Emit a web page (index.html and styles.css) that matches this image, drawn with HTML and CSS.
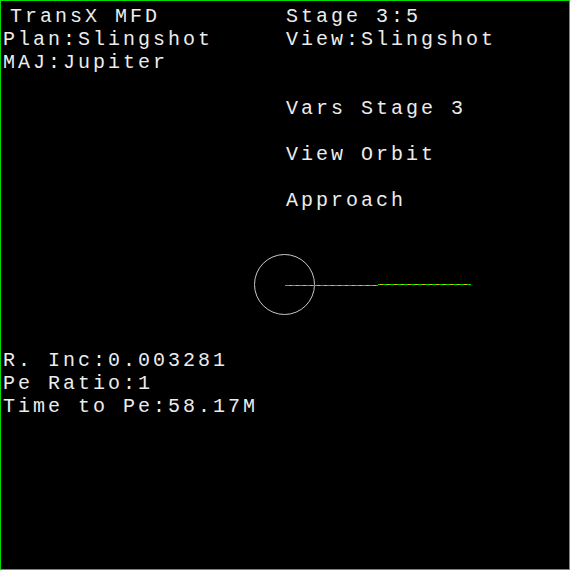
FILE: index.html
```html
<!DOCTYPE html>
<html>
<head>
<meta charset="utf-8">
<link rel="stylesheet" href="styles.css">
</head>
<body>
<div class="mfd">
  <div class="top">
    <div class="col left">
      <div class="line title">TransX MFD</div>
      <div class="line">Plan:Slingshot</div>
      <div class="line">MAJ:Jupiter</div>
    </div>
    <div class="col right">
      <div class="line">Stage 3:5</div>
      <div class="line">View:Slingshot</div>
      <div class="line"></div>
      <div class="line"></div>
      <div class="line">Vars Stage 3</div>
      <div class="line"></div>
      <div class="line">View Orbit</div>
      <div class="line"></div>
      <div class="line">Approach</div>
    </div>
  </div>
  <svg class="plot" width="568" height="137" viewBox="0 0 568 137" shape-rendering="crispEdges">
    <defs>
      <pattern id="dash" patternUnits="userSpaceOnUse" x="284" y="0" width="7" height="137">
        <rect x="0" y="0" width="4" height="137" fill="#00e400"/>
        <rect x="4" y="0" width="3" height="137" fill="#d8c800"/>
      </pattern>
    </defs>
    <circle cx="283.5" cy="72.5" r="30" fill="none" stroke="#c8c8c8" stroke-width="1" shape-rendering="auto"/>
    <rect x="284" y="73" width="93" height="1" fill="url(#dash)"/>
    <rect x="377" y="72" width="93" height="1" fill="url(#dash)"/>
  </svg>
  <div class="bottom">
    <div class="line">R. Inc:0.003281</div>
    <div class="line">Pe Ratio:1</div>
    <div class="line">Time to Pe:58.17M</div>
  </div>
</div>
</body>
</html>
```

FILE: styles.css
```css
html, body {
  margin: 0;
  padding: 0;
  background: #000;
}
.mfd {
  box-sizing: border-box;
  width: 570px;
  height: 570px;
  border: 1px solid #00e000;
  background: #000;
  color: #ececec;
  font-family: "Liberation Mono", "Courier New", monospace;
  font-size: 20px;
  letter-spacing: 3px;
  line-height: 23px;
  padding-top: 4px;
  overflow: hidden;
}
.top {
  display: flex;
}
.col.left {
  width: 283px;
}
.line {
  height: 23px;
  padding-left: 2px;
  white-space: pre;
}
.line.title {
  padding-left: 9px;
}
.plot {
  display: block;
}
```
